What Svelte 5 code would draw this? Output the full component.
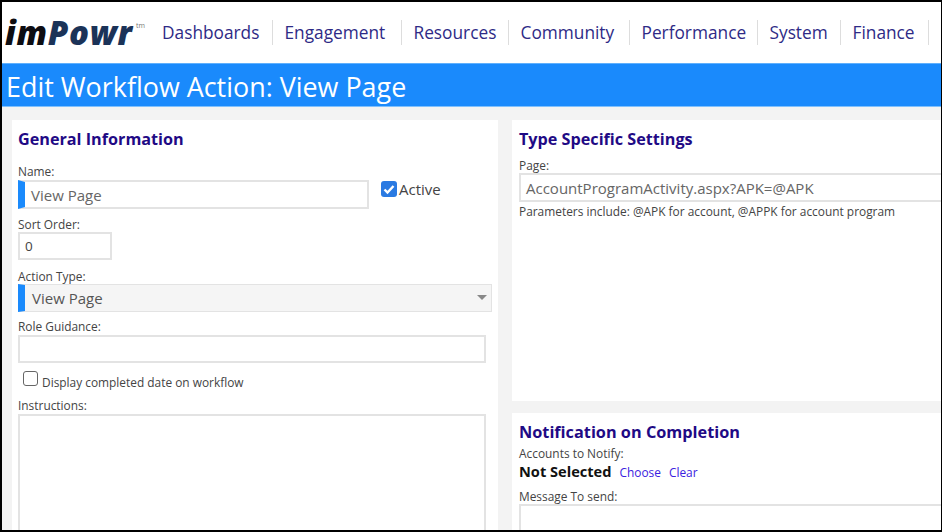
<div class="frame">
  <header class="top">
    <div class="logo"><span class="im">im</span><span class="powr">Powr</span><sup>tm</sup></div>
    <nav>
      {#each nav as n}
        <a href="#top" style="width:{n.w}px">{n.t}</a>
      {/each}
    </nav>
  </header>
  <h1>Edit Workflow Action: View Page</h1>
  <main>
    <section class="left">
      <h2>General Information</h2>
      <div class="lbl name-lbl">Name:</div>
      <div class="row">
        <div class="input req name">View Page</div>
        <label class="active"><span class="chk"><svg viewBox="0 0 16 16" width="16" height="16"><path d="M3.5 8.5l3 3 6-6.5" fill="none" stroke="#fff" stroke-width="2.4"/></svg></span>Active</label>
      </div>
      <div class="lbl sort-lbl">Sort Order:</div>
      <div class="input sort">0</div>
      <div class="lbl type-lbl">Action Type:</div>
      <div class="input req select">View Page<span class="caret"></span></div>
      <div class="lbl role-lbl">Role Guidance:</div>
      <div class="input role"></div>
      <label class="completed"><span class="box"></span>Display completed date on workflow</label>
      <div class="lbl ins-lbl">Instructions:</div>
      <div class="input area"></div>
    </section>
    <div class="right">
      <section class="type">
        <h2>Type Specific Settings</h2>
        <div class="lbl page-lbl">Page:</div>
        <div class="input page">AccountProgramActivity.aspx?APK=@APK</div>
        <div class="lbl hint">Parameters include: @APK for account, @APPK for account program</div>
      </section>
      <section class="notify">
        <h2>Notification on Completion</h2>
        <div class="lbl acc">Accounts to Notify:</div>
        <div class="sel"><b>Not Selected</b><a href="#top">Choose</a><a href="#top">Clear</a></div>
        <div class="lbl msg">Message To send:</div>
        <div class="input msgbox"></div>
      </section>
    </div>
  </main>
</div>

<script>
  const nav = [
    { t: 'Dashboards', w: 111 },
    { t: 'Engagement', w: 129 },
    { t: 'Resources', w: 107 },
    { t: 'Community', w: 121 },
    { t: 'Performance', w: 128 },
    { t: 'System', w: 83 },
    { t: 'Finance', w: 88 }
  ];
</script>

<style>
  :global(body) { margin: 0; background: #fff; }
  .frame {
    width: 942px; height: 532px; box-sizing: border-box; overflow: hidden;
    border-top: 2px solid #000; border-left: 2px solid #000;
    border-right: 1px solid #000; border-bottom: 2px solid #000;
    font-family: "Open Sans", "Noto Sans", sans-serif; color: #333;
    background: #f3f3f3; display: flex; flex-direction: column;
  }
  .top { height: 61px; flex: none; background: #fff; display: flex; align-items: flex-start; }
  .logo { width: 160px; flex: none; height: 61px; position: relative; font-family: "Open Sans", sans-serif; font-style: italic; font-weight: 800; font-size: 33px; line-height: 61px; padding-left: 3px; box-sizing: border-box; white-space: nowrap; letter-spacing: 0.7px; }
  .im { color: #0d0d12; }
  .powr { color: #1b3358; }
  .logo sup { position: absolute; left: 134px; top: 20px; font-size: 7px; line-height: 7px; font-style: normal; font-weight: 400; color: #777; letter-spacing: 0; }
  nav { display: flex; margin-top: 18px; }
  nav a { display: block; box-sizing: border-box; height: 25px; line-height: 25px; font-size: 17.3px; color: #2e2a86; text-decoration: none; border-right: 1px solid #ddd; padding-left: 11.5px; white-space: nowrap; }
  nav a:first-child { padding-left: 0; }
  h1 { margin: 0; height: 44px; flex: none; box-sizing: border-box; background: #1a8afc; border-top: 1px solid #5fb0fd; border-bottom: 1px solid #7fc0fd; color: #fff; font-weight: 400; font-size: 26.9px; line-height: 45px; padding-left: 4px; white-space: nowrap; }
  main { flex: 1; min-height: 0; display: flex; gap: 14px; padding: 13px 0 0 10px; }
  section { background: #fff; box-sizing: border-box; }
  .left { width: 486px; flex: none; padding: 8px 0 0 6px; height: 420px; }
  .right { flex: 1; display: flex; flex-direction: column; gap: 12px; min-width: 0; min-height: 0; }
  .type { flex: none; height: 281px; padding: 8px 0 0 7px; }
  .notify { flex: 1; min-height: 0; overflow: hidden; padding: 8px 0 0 7px; }
  h2 { margin: 0; font-size: 16.2px; line-height: 22px; font-weight: 700; color: #1f0a85; white-space: nowrap; }
  .lbl { font-size: 11.9px; line-height: 15px; color: #444; white-space: nowrap; }
  .input { box-sizing: border-box; border: 2px solid #e3e3e3; background: #fff; font-size: 15px; color: #666; white-space: nowrap; }
  .req { border-left: 7px solid #1a8afc; padding-left: 6px; }
  .name-lbl { margin-top: 14px; }
  .row { display: flex; align-items: center; margin-top: 1px; }
  .name { width: 351px; height: 29px; line-height: 26px; }
  .active { display: flex; align-items: center; font-size: 15px; color: #444; margin-left: 12px; margin-top: -11px; }
  .chk { width: 16px; height: 16px; border-radius: 3px; background: #2a7ae2; margin-right: 2px; }
  .chk svg { display: block; }
  .sort-lbl { margin-top: 8px; }
  .sort { width: 94px; height: 28px; line-height: 25px; padding-left: 5px; color: #444; font-size: 13.5px; }
  .type-lbl { margin-top: 9px; }
  .select { width: 474px; height: 28px; line-height: 27px; background: #f5f5f5; position: relative; color: #555; border-width: 1px 1px 1px 7px; padding-left: 7px; }
  .caret { position: absolute; right: 4px; top: 10px; border: 5px solid transparent; border-top: 5px solid #888; border-bottom: 0; }
  .role-lbl { margin-top: 7px; }
  .role { width: 468px; height: 28px; margin-top: 1px; }
  .completed { display: flex; align-items: center; font-size: 11.9px; line-height: 15px; color: #444; margin: 12px 0 0 5px; }
  .box { width: 13px; height: 13px; border: 1px solid #666; border-radius: 3px; margin: -9px 4px 0 0; flex: none; }
  .ins-lbl { margin-top: 8px; }
  .area { width: 468px; height: 140px; margin-top: 1px; }
  .page-lbl { margin-top: 8px; }
  .page { height: 29px; line-height: 26px; padding-left: 5px; margin-right: -3px; }
  .hint { margin-top: 2px; }
  .notify h2 { font-size: 16.3px; }
  .acc { margin-top: 3px; }
  .sel { display: flex; align-items: baseline; margin-top: 0; height: 21px; }
  .sel b { font-size: 14.6px; color: #111; margin-right: 8px; }
  .sel a { font-size: 11.9px; color: #3b22e0; text-decoration: none; margin-right: 8px; }
  .msg { margin-top: 7px; }
  .msgbox { height: 40px; margin-right: -3px; }
</style>
